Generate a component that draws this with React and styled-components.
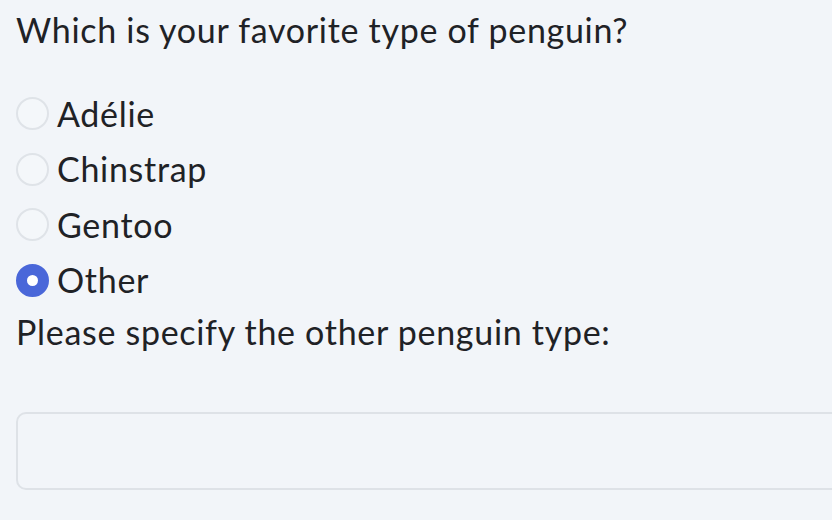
import React from "react";
import styled, { createGlobalStyle } from "styled-components";

const Global = createGlobalStyle`
  html, body { margin: 0; padding: 0; background: #f2f5f9; overflow: hidden; }
  body { font-family: Lato, "Noto Sans", sans-serif; color: #1f2226; }
`;

const Page = styled.div`
  width: 832px;
  height: 520px;
  padding: 0 0 0 16px;
  box-sizing: border-box;
  overflow: hidden;
  font-size: 34px;
  letter-spacing: 0.7px;
`;

const Question = styled.h1`
  margin: 0;
  padding-top: 6px;
  font-size: 34px;
  font-weight: 400;
  line-height: 48px;
`;

const Options = styled.div`
  display: flex;
  flex-direction: column;
  margin-top: 32px;
`;

const Option = styled.label`
  display: flex;
  align-items: center;
  gap: 8px;
  height: 55.5px;
  line-height: 1;
`;

const Radio = styled.span`
  box-sizing: border-box;
  width: 33px;
  height: 33px;
  border-radius: 50%;
  flex: none;
  display: flex;
  align-items: center;
  justify-content: center;
  background: ${(p) => (p.$checked ? "#4a67d9" : "#f4f7fa")};
  border: 2px solid ${(p) => (p.$checked ? "#4a67d9" : "#dfe3e8")};
  &::after {
    content: "";
    display: ${(p) => (p.$checked ? "block" : "none")};
    width: 11px;
    height: 11px;
    border-radius: 50%;
    background: #ffffff;
  }
`;

const FieldLabel = styled.div`
  line-height: 48px;
`;

const TextBox = styled.div`
  margin-top: 56px;
  width: 900px;
  height: 78px;
  box-sizing: border-box;
  border: 2px solid #dee2e7;
  border-radius: 10px;
  background: #f2f5f9;
`;

const options = ["Adélie", "Chinstrap", "Gentoo", "Other"];

export default function App() {
  return (
    <Page>
      <Global />
      <Question>Which is your favorite type of penguin?</Question>
      <Options>
        {options.map((o) => (
          <Option key={o}>
            <Radio $checked={o === "Other"} />
            {o}
          </Option>
        ))}
      </Options>
      <FieldLabel>Please specify the other penguin type:</FieldLabel>
      <TextBox />
    </Page>
  );
}
